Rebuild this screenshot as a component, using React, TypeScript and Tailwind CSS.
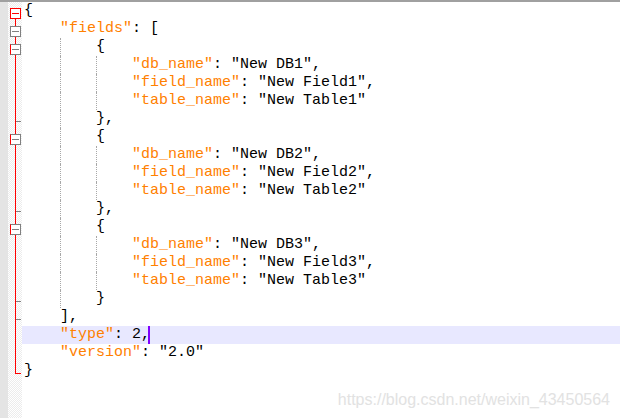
import React from "react";

type Line = { indent: number; key?: string; rest: string; hl?: boolean };

const lines: Line[] = [
  { indent: 0, rest: "{" },
  { indent: 4, key: '"fields"', rest: ": [" },
  { indent: 8, rest: "{" },
  { indent: 12, key: '"db_name"', rest: ': "New DB1",' },
  { indent: 12, key: '"field_name"', rest: ': "New Field1",' },
  { indent: 12, key: '"table_name"', rest: ': "New Table1"' },
  { indent: 8, rest: "}," },
  { indent: 8, rest: "{" },
  { indent: 12, key: '"db_name"', rest: ': "New DB2",' },
  { indent: 12, key: '"field_name"', rest: ': "New Field2",' },
  { indent: 12, key: '"table_name"', rest: ': "New Table2"' },
  { indent: 8, rest: "}," },
  { indent: 8, rest: "{" },
  { indent: 12, key: '"db_name"', rest: ': "New DB3",' },
  { indent: 12, key: '"field_name"', rest: ': "New Field3",' },
  { indent: 12, key: '"table_name"', rest: ': "New Table3"' },
  { indent: 8, rest: "}" },
  { indent: 4, rest: "]," },
  { indent: 4, key: '"type"', rest: ": 2,", hl: true },
  { indent: 4, key: '"version"', rest: ': "2.0"' },
  { indent: 0, rest: "}" },
];

const foldBoxes = [0, 1, 2, 7, 12];
const ticks = [6, 11, 16, 17];

function Gutter() {
  const h = 418;
  const cy = (n: number) => 2 + n * 18 + 9.5;
  return (
    <div className="relative w-[14px] h-full bg-[repeating-conic-gradient(#ececec_0_25%,#ffffff_0_50%)] bg-[length:2px_2px]">
      <svg width="14" height={h} className="absolute left-0 top-0">
        <line x1="7.5" y1={cy(0)} x2="7.5" y2={cy(20)} stroke="#ff0000" strokeWidth="1" />
        <line x1="7" y1={cy(20)} x2="13" y2={cy(20)} stroke="#ff0000" strokeWidth="1" />
        {ticks.map((t) => (
          <line key={t} x1="8" y1={cy(t)} x2="13" y2={cy(t)} stroke="#808080" strokeWidth="1" />
        ))}
        {foldBoxes.map((b) => {
          const y = 2 + b * 18 + 4;
          const red = b === 0;
          const c = red ? "#ff0000" : "#808080";
          return (
            <g key={b}>
              <rect x="2.5" y={y + 0.5} width="10" height="10" fill="#ffffff" stroke={c} strokeWidth="1" />
              {!red && (
                <path d={`M2.5 ${y + 0.5} V${y + 10.5}`} stroke="#ff0000" strokeWidth="1" opacity={b === 1 ? 0 : 1} />
              )}
              <line x1="4" y1={y + 5.5} x2="11" y2={y + 5.5} stroke={c} strokeWidth="1" />
            </g>
          );
        })}
      </svg>
    </div>
  );
}

function CodeLine({ line }: { line: Line }) {
  const guides = [] as number[];
  for (let c = 4; c < line.indent; c += 4) guides.push(c);
  const lead = line.indent >= 4 ? 1 : 0;
  const restSpaces = line.indent - (lead + guides.length) * 4;
  return (
    <div className={`h-[18px] leading-[18px] whitespace-pre pl-[2px] flex ${line.hl ? "bg-[#e8e8ff]" : ""}`}>
      {lead ? <span className="inline-block w-[36px] h-[18px]" /> : null}
      {guides.map((g) => (
        <span key={g} className="inline-block w-[36px] h-[18px] border-l border-dotted border-[#a8a8a8]" />
      ))}
      {restSpaces > 0 ? <span>{" ".repeat(restSpaces)}</span> : null}
      {line.key ? <span className="text-[#ff8000]">{line.key}</span> : null}
      <span className="text-black">{line.rest}</span>
      {line.hl ? <span className="inline-block w-[2px] h-[18px] ml-[-2px] bg-[#8000ff]" /> : null}
    </div>
  );
}

export default function App() {
  return (
    <div className="relative w-[620px] h-[418px] bg-white overflow-hidden">
      <div className="h-[2px] bg-[#a0a0a0]" />
      <div className="flex h-[416px]">
        <div className="w-[8px] h-full bg-[#e4e4e4]" />
        <Gutter />
        <div className="flex-1 font-['Liberation_Mono','Courier_New',monospace] text-[15px]">
          {lines.map((l, i) => (
            <CodeLine key={i} line={l} />
          ))}
        </div>
      </div>
      <div className="absolute right-[10px] top-[392px] font-['Liberation_Sans',Arial,sans-serif] text-[16px] leading-[16px] text-[#e2e2e2]">
        https://blog.csdn.net/weixin_43450564
      </div>
    </div>
  );
}
